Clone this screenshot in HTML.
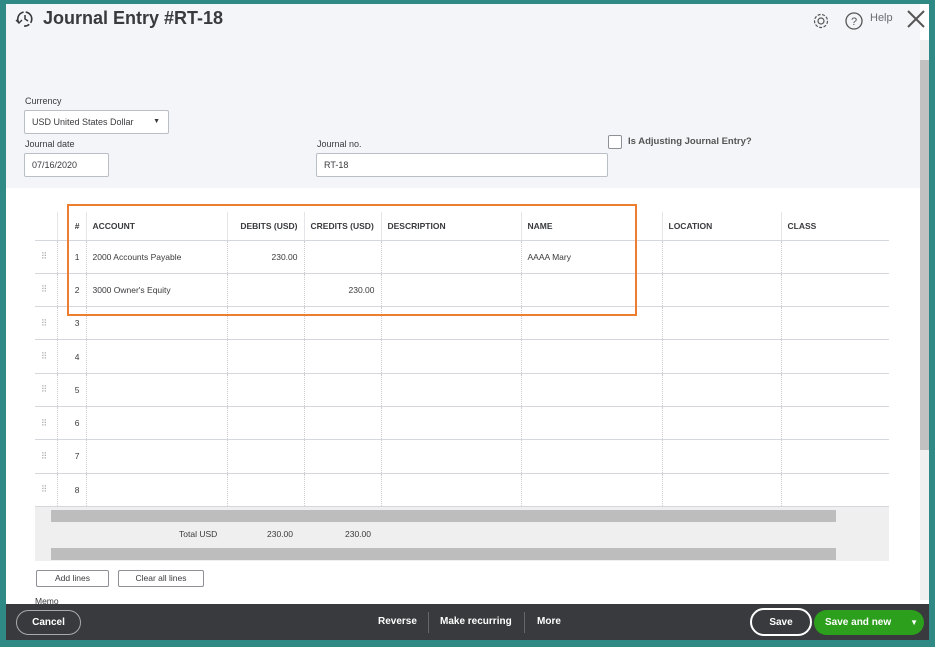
<!DOCTYPE html>
<html><head><style>
*{box-sizing:border-box;margin:0;padding:0}
body{width:935px;height:647px;overflow:hidden;background:#2f8a85;font-family:"Liberation Sans",sans-serif;color:#393a3d;position:relative}
.abs{position:absolute}
#panel{left:6px;top:4px;width:923px;height:636px;background:#fff;overflow:hidden}
#hdr{left:0;top:0;width:914px;height:184px;background:#f4f5f8}
.lbl{font-size:9px;color:#393a3d}
.inp{background:#fff;border:1px solid #babec5;border-radius:2px;font-size:9px;padding:0 7px;line-height:22px;height:24px}
table{border-collapse:collapse;font-size:8.5px}
td{height:33.3px;border-bottom:1px solid #d4d7dc;border-right:1px dotted #ccc;padding:0 6px}
th{height:28px;font-weight:bold;font-size:8.5px;text-align:left;padding:0 6px;border-bottom:1px solid #d4d7dc;border-right:1px solid #e3e5e8}
.r{text-align:right}
tr td:nth-child(2),tr th:nth-child(2){text-align:right}
.btn{background:#fff;border:1px solid #8d9096;border-radius:2px;font-size:8.5px;text-align:center;line-height:15px;height:17px}
#foot{left:6px;top:604px;width:923px;height:36px;background:#393a3d;color:#fff;font-size:10px;font-weight:bold}
</style></head><body>
<div id="panel" class="abs">
 <div id="hdr" class="abs"></div>
 <svg class="abs" style="left:8px;top:5px" width="22" height="20" viewBox="0 0 22 20"><path d="M5 14 A7 7 0 1 1 10 17" fill="none" stroke="#393a3d" stroke-width="1.6" stroke-dasharray="14 2"/><path d="M11 6v4l3 2" fill="none" stroke="#393a3d" stroke-width="1.5"/><path d="M2 11l3 3 3-3" fill="none" stroke="#393a3d" stroke-width="1.4"/></svg>
 <div class="abs" style="left:37px;top:4px;font-size:18px;font-weight:bold;color:#393a3d">Journal Entry #RT-18</div>
 <svg class="abs" style="left:806px;top:8px" width="18" height="18" viewBox="0 0 18 18"><circle cx="9" cy="9" r="3" fill="none" stroke="#555" stroke-width="1.2"/><circle cx="9" cy="9" r="6.5" fill="none" stroke="#555" stroke-width="1.2" stroke-dasharray="3 1.5"/></svg>
 <svg class="abs" style="left:838px;top:7px" width="20" height="20"><circle cx="10" cy="10" r="8" fill="none" stroke="#555" stroke-width="1.3"/><text x="10" y="14" font-size="11" text-anchor="middle" fill="#555" font-family="Liberation Sans">?</text></svg>
 <div class="abs" style="left:864px;top:8px;font-size:11px;color:#6b6c72">Help</div>
 <svg class="abs" style="left:900px;top:5px" width="20" height="20"><path d="M2 2L18 18M18 2L2 18" stroke="#555" stroke-width="2"/></svg>
 <div class="abs lbl" style="left:19px;top:92px">Currency</div>
 <div class="abs inp" style="left:18px;top:106px;width:145px">USD United States Dollar <span style="position:absolute;right:8px;font-size:7px">▼</span></div>
 <div class="abs lbl" style="left:19px;top:135px">Journal date</div>
 <div class="abs inp" style="left:18px;top:149px;width:85px">07/16/2020</div>
 <div class="abs lbl" style="left:311px;top:135px">Journal no.</div>
 <div class="abs inp" style="left:310px;top:149px;width:292px">RT-18</div>
 <div class="abs" style="left:602px;top:131px;width:14px;height:14px;border:1px solid #8d9096;border-radius:2px;background:#fff"></div>
 <div class="abs" style="left:622px;top:132px;font-size:9.5px;font-weight:bold;color:#555">Is Adjusting Journal Entry?</div>
 <table class="abs" style="left:29px;top:208px;width:854px">
  <tr><th style="width:22px;border-right:1px solid #e3e5e8"></th><th style="width:29px">#</th><th style="width:141px">ACCOUNT</th><th style="width:77px" class="r">DEBITS (USD)</th><th style="width:77px">CREDITS (USD)</th><th style="width:140px">DESCRIPTION</th><th style="width:141px">NAME</th><th style="width:119px">LOCATION</th><th style="border-right:none">CLASS</th></tr>
  <tr><td style="color:#aaa">⠿</td><td>1</td><td>2000 Accounts Payable</td><td class="r">230.00</td><td></td><td></td><td>AAAA Mary</td><td></td><td style="border-right:none"></td></tr>
  <tr><td style="color:#aaa">⠿</td><td>2</td><td>3000 Owner's Equity</td><td></td><td class="r">230.00</td><td></td><td></td><td></td><td style="border-right:none"></td></tr>
  <tr><td style="color:#aaa">⠿</td><td>3</td><td></td><td></td><td></td><td></td><td></td><td></td><td style="border-right:none"></td></tr>
  <tr><td style="color:#aaa">⠿</td><td>4</td><td></td><td></td><td></td><td></td><td></td><td></td><td style="border-right:none"></td></tr>
  <tr><td style="color:#aaa">⠿</td><td>5</td><td></td><td></td><td></td><td></td><td></td><td></td><td style="border-right:none"></td></tr>
  <tr><td style="color:#aaa">⠿</td><td>6</td><td></td><td></td><td></td><td></td><td></td><td></td><td style="border-right:none"></td></tr>
  <tr><td style="color:#aaa">⠿</td><td>7</td><td></td><td></td><td></td><td></td><td></td><td></td><td style="border-right:none"></td></tr>
  <tr><td style="color:#aaa">⠿</td><td>8</td><td></td><td></td><td></td><td></td><td></td><td></td><td style="border-right:none"></td></tr>
 </table>
 <div class="abs" style="left:61px;top:200px;width:570px;height:112px;border:2px solid #ed7d31"></div>
 <div class="abs" style="left:29px;top:503px;width:854px;height:54px;background:#efefef"></div>
 <div class="abs" style="left:45px;top:506px;width:785px;height:12px;background:#bdbdbd"></div>
 <div class="abs" style="left:45px;top:544px;width:785px;height:12px;background:#bdbdbd"></div>
 <div class="abs" style="left:173px;top:525px;font-size:8.5px">Total USD</div>
 <div class="abs" style="left:261px;top:525px;font-size:8.5px">230.00</div>
 <div class="abs" style="left:339px;top:525px;font-size:8.5px">230.00</div>
 <div class="abs btn" style="left:30px;top:566px;width:73px">Add lines</div>
 <div class="abs btn" style="left:112px;top:566px;width:86px">Clear all lines</div>
 <div class="abs" style="left:29px;top:592px;font-size:8.5px">Memo</div>
 <div class="abs" style="left:914px;top:36px;width:9px;height:560px;background:#f0f0f0"></div>
 <div class="abs" style="left:914px;top:56px;width:9px;height:390px;background:#c1c1c1"></div>
</div>
<div id="foot" class="abs">
 <div class="abs" style="left:10px;top:6px;width:65px;height:25px;border:1px solid #aaa;border-radius:13px;text-align:center;line-height:23px">Cancel</div>
 <div class="abs" style="left:372px;top:12px">Reverse</div>
 <div class="abs" style="left:422px;top:8px;width:1px;height:21px;background:#666"></div>
 <div class="abs" style="left:434px;top:12px">Make recurring</div>
 <div class="abs" style="left:518px;top:8px;width:1px;height:21px;background:#666"></div>
 <div class="abs" style="left:531px;top:12px">More</div>
 <div class="abs" style="left:744px;top:4px;width:62px;height:28px;border:2px solid #fff;border-radius:14px;text-align:center;line-height:25px">Save</div>
 <div class="abs" style="left:808px;top:6px;width:110px;height:25px;background:#2ca01c;border-radius:13px;line-height:25px;padding-left:11px">Save and new <span style="position:absolute;right:6px;font-size:8px">▼</span></div>
</div>
</body></html>
